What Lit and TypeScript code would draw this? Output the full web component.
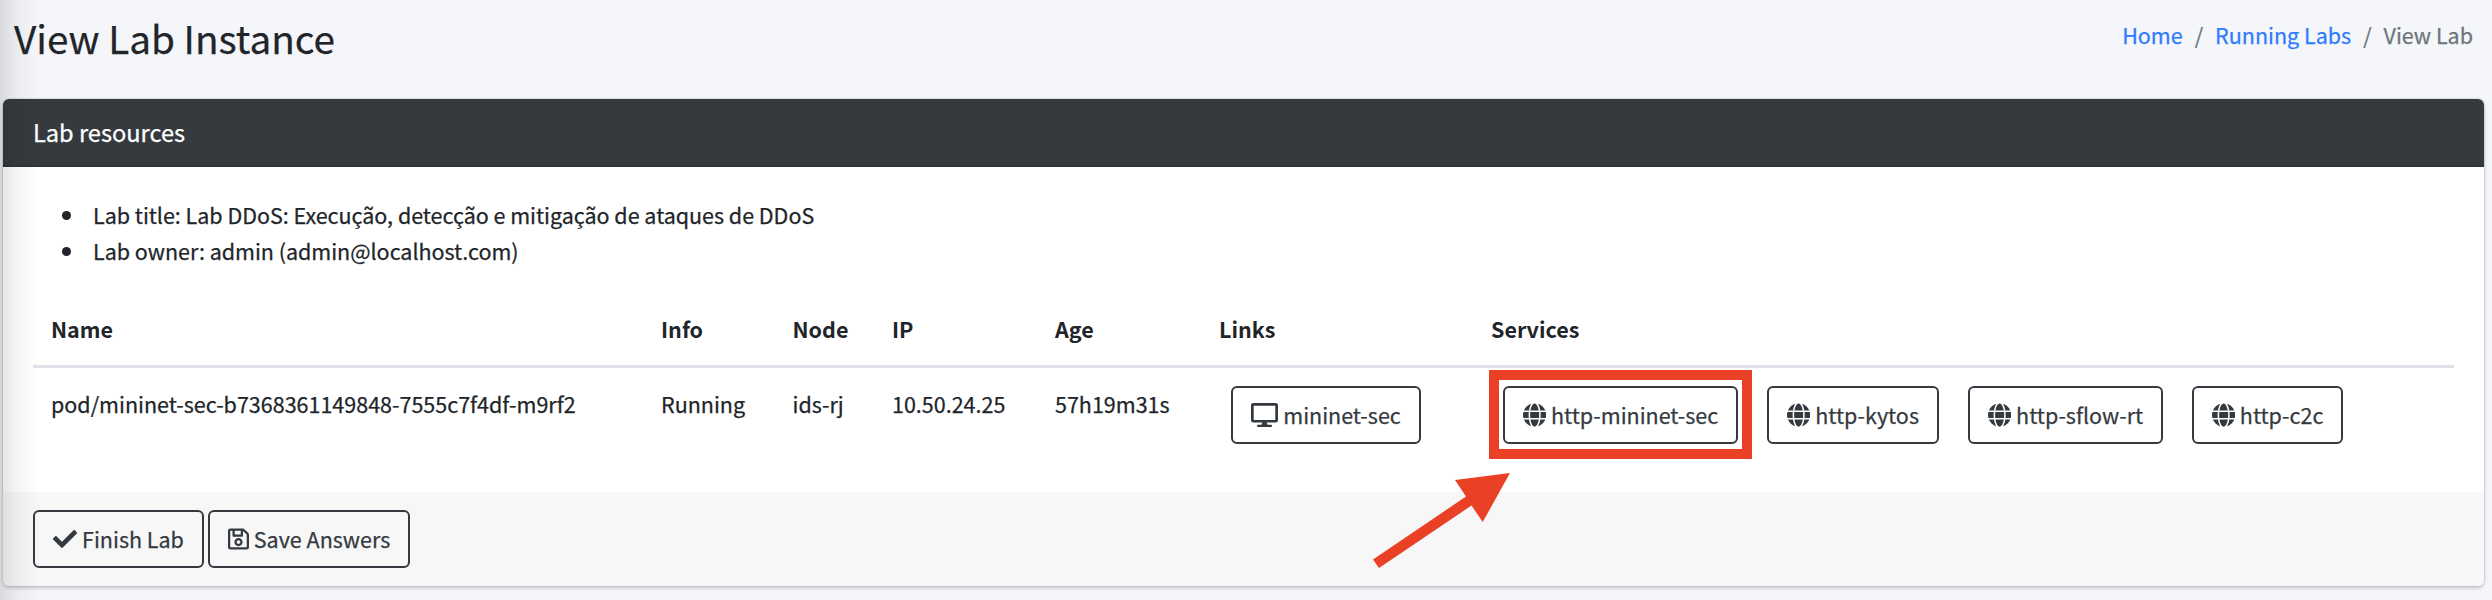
import { LitElement, html, css, svg } from "lit";
import { customElement } from "lit/decorators.js";

const shapes: Record<string, { box: string; w: number; d: string }> = {
  globe: { box: "0 0 496 512", w: 23.25, d: "M336.5 160C322 70.7 287.8 8 248 8s-74 62.7-88.5 152h177zM152 256c0 22.2 1.2 43.5 3.3 64h185.3c2.1-20.5 3.3-41.8 3.3-64s-1.200-43.500-3.300-64H155.300c-2.100 20.500-3.300 41.800-3.300 64zm324.700-96c-28.600-67.900-86.500-120.400-158-141.600 24.400 33.800 41.200 84.700 50 141.600h108zM177.200 18.400C105.800 39.600 47.800 92.100 19.300 160h108c8.700-56.900 25.500-107.800 49.900-141.600zM487.400 192H372.700c2.100 21 3.300 42.500 3.300 64s-1.200 43-3.300 64h114.600c5.500-20.500 8.600-41.800 8.600-64s-3.100-43.500-8.500-64zM120 256c0-21.500 1.200-43 3.300-64H8.600C3.200 212.500 0 233.800 0 256s3.200 43.500 8.600 64h114.600c-2-21-3.200-42.500-3.200-64zm39.500 96c14.500 89.300 48.700 152 88.500 152s74-62.700 88.500-152h-177zm159.300 141.600c71.400-21.200 129.400-73.700 158-141.600h-108c-8.800 56.900-25.600 107.800-50 141.600zM19.300 352c28.600 67.900 86.500 120.400 158 141.600-24.400-33.800-41.200-84.700-50-141.600h-108z" },
  desktop: { box: "0 0 576 512", w: 27, d: "M528 0H48C21.500 0 0 21.500 0 48v320c0 26.500 21.500 48 48 48h192l-16 48h-72c-13.300 0-24 10.700-24 24s10.700 24 24 24h272c13.300 0 24-10.700 24-24s-10.700-24-24-24h-72l-16-48h192c26.500 0 48-21.500 48-48V48c0-26.500-21.500-48-48-48zm-10 360H58V58h460v302z" },
  check: { box: "0 0 512 512", w: 24, d: "M173.898 439.404l-166.400-166.400c-9.997-9.997-9.997-26.206 0-36.204l36.203-36.204c9.997-9.998 26.207-9.998 36.204 0L192 312.690 432.095 72.596c9.997-9.997 26.207-9.997 36.204 0l36.203 36.204c9.997 9.997 9.997 26.206 0 36.204l-294.400 294.401c-9.998 9.997-26.207 9.997-36.204-.001z" },
  save: { box: "0 0 448 512", w: 21, d: "M433.941 129.941l-83.882-83.882A48 48 0 0 0 316.118 32H48C21.490 32 0 53.490 0 80v352c0 26.510 21.490 48 48 48h352c26.510 0 48-21.490 48-48V163.882a48 48 0 0 0-14.059-33.941zM272 80v80H144V80h128zm122 352H54a6 6 0 0 1-6-6V86a6 6 0 0 1 6-6h42v104c0 13.255 10.745 24 24 24h176c13.255 0 24-10.745 24-24V83.882l78.243 78.243a6 6 0 0 1 1.757 4.243V426a6 6 0 0 1-6 6zM224 232c-48.523 0-88 39.477-88 88s39.477 88 88 88 88-39.477 88-88-39.477-88-88-88zm0 128c-22.056 0-40-17.944-40-40s17.944-40 40-40 40 17.944 40 40-17.944 40-40 40z" },
};

@customElement("icon-button")
class IconButton extends LitElement {
  static properties = { icon: {}, label: {} };
  declare icon: string;
  declare label: string;
  static styles = css`
    :host { display: block; }
    .btn {
      box-sizing: border-box; width: 100%; height: 58px; display: flex; align-items: center; justify-content: center; gap: 5px;
      border: 2px solid #343a40; border-radius: 6px; background: transparent; color: #343a40; padding: 0 0 1px;
      font: 21.5px/36px "Noto Sans CJK SC", sans-serif; white-space: nowrap; -webkit-text-stroke: 0.25px currentColor;
    }
    svg { height: 24px; flex: none; fill: currentColor; }
  `;
  render() {
    const s = shapes[this.icon];
    return html`<button class="btn"><svg viewBox=${s.box} width=${s.w}>${svg`<path d=${s.d} />`}</svg><span>${this.label}</span></button>`;
  }
}

@customElement("app-root")
class AppRoot extends LitElement {
  static styles = css`
    :host {
      display: block; position: relative; box-sizing: border-box; height: 600px; overflow: hidden; background: #f4f6f9;
      color: #212529; font: 21.5px/36px "Noto Sans CJK SC", sans-serif; -webkit-text-stroke: 0.25px currentColor;
    }
    .top { height: 99px; box-sizing: border-box; padding: 11px 19px 0 14px; display: flex; justify-content: space-between; align-items: flex-start; }
    h1 { margin: 0; font-size: 38.7px; line-height: 52px; font-weight: 400; }
    .crumbs { display: flex; gap: 12px; margin-top: 6px; color: #6c757d; }
    .crumbs a { color: #307bff; text-decoration: none; }
    .card { margin: 0 8px 0 3px; height: 487px; border-radius: 6px; background: #fff; box-shadow: 0 0 2px rgba(0,0,0,.22), 0 2px 4px rgba(0,0,0,.2); overflow: hidden; }
    .head { box-sizing: border-box; height: 68px; padding: 15px 30px; background: #353a3e; border-bottom: 2px solid #2f343a; color: #fff; font-size: 23.6px; }
    .body { box-sizing: border-box; height: 325px; padding: 30px; }
    ul { margin: 0 0 24px; padding: 0 0 0 29px; list-style: none; }
    li { display: flex; align-items: center; gap: 22px; letter-spacing: -0.02px; }
    li::before { content: ""; width: 9px; height: 9px; border-radius: 50%; background: #212529; }
    .grid { display: grid; grid-template-columns: 610px 131.5px 99.500px 163px 164px 272px 1fr; }
    .th { height: 75px; box-sizing: border-box; padding: 18px; font-weight: 700; border-bottom: 3px solid #dee2e6; -webkit-text-stroke: 0; }
    .td { padding: 18px; white-space: nowrap; }
    .row { display: flex; gap: 29px; padding-left: 12px; }
    .foot { height: 94px; box-sizing: border-box; background: #f7f7f7; padding: 18px 30px; display: flex; gap: 4px; }
    .b1 { width: 190px; } .b2 { width: 235px; } .b3 { width: 172px; } .b4 { width: 195px; } .b5 { width: 151px; }
    .b6 { width: 171px; } .b7 { width: 202px; }
    .edge { position: absolute; left: 0; top: 0; width: 40px; height: 600px; background: linear-gradient(90deg, rgba(0,0,0,.11), rgba(0,0,0,.04) 45%, transparent); pointer-events: none; }
    .frame { position: absolute; left: 1489px; top: 370px; width: 263px; height: 89px; box-sizing: border-box; border: 10px solid #ea4025; }
    .arrow { position: absolute; left: 1360px; top: 460px; fill: #ea4025; }
  `;
  render() {
    return html`
      <header class="top"><h1>View Lab Instance</h1>
        <nav class="crumbs"><a>Home</a><span>/</span><a>Running Labs</a><span>/</span><span>View Lab</span></nav></header>
      <section class="card">
        <div class="head">Lab resources</div>
        <div class="body">
          <ul><li>Lab title: Lab DDoS: Execução, detecção e mitigação de ataques de DDoS</li><li>Lab owner: admin (admin@localhost.com)</li></ul>
          <div class="grid">
            ${["Name", "Info", "Node", "IP", "Age", "Links", "Services"].map((t) => html`<div class="th">${t}</div>`)}
            ${["pod/mininet-sec-b7368361149848-7555c7f4df-m9rf2", "Running", "ids-rj", "10.50.24.25", "57h19m31s"].map((t) => html`<div class="td">${t}</div>`)}
            <div class="td"><div class="row"><icon-button class="b1" icon="desktop" label="mininet-sec"></icon-button></div></div>
            <div class="td"><div class="row">
              <icon-button class="b2" icon="globe" label="http-mininet-sec"></icon-button>
              <icon-button class="b3" icon="globe" label="http-kytos"></icon-button>
              <icon-button class="b4" icon="globe" label="http-sflow-rt"></icon-button>
              <icon-button class="b5" icon="globe" label="http-c2c"></icon-button>
            </div></div>
          </div>
        </div>
        <div class="foot"><icon-button class="b6" icon="check" label="Finish Lab"></icon-button><icon-button class="b7" icon="save" label="Save Answers"></icon-button></div>
      </section>
      <div class="edge"></div>
      <div class="frame"></div>
      <svg class="arrow" width="160" height="120" viewBox="0 0 160 120"><path d="M150 13L95 20L106 36.500L13 99.500L19 108L111.500 45.500L122.700 62Z" /></svg>`;
  }
}
